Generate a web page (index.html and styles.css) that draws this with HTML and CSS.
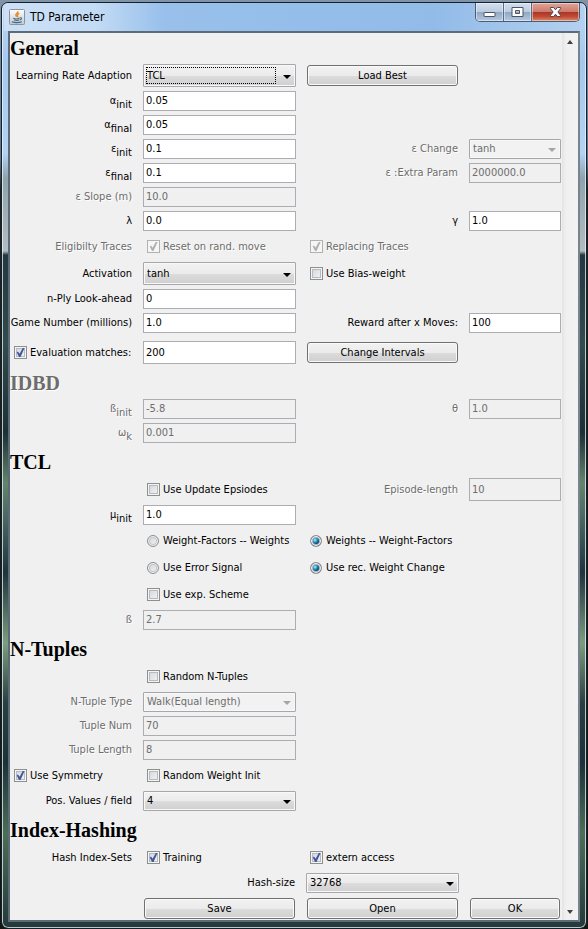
FILE: index.html
```html
<!DOCTYPE html>
<html lang="en">
<head>
<meta charset="utf-8">
<title>TD Parameter</title>
<link rel="stylesheet" href="styles.css">
</head>
<body>
<div class="window">
  <header class="titlebar">
    <svg class="app-icon" viewBox="0 0 16 16" aria-hidden="true">
      <defs><linearGradient id="tile" x1="0" y1="0" x2="0" y2="1"><stop offset="0" stop-color="#fdfdfd"/><stop offset="1" stop-color="#c3c8ce"/></linearGradient></defs>
      <rect x=".5" y=".5" width="15" height="15" rx="1" fill="url(#tile)" stroke="#8a949f"/>
      <path d="M8.8 2.2c.9 1.700-2.700 2.500-1.900 4.200.2.500.7.900.9 1.400M10.200 4.400C8.300 5.300 8 6.100 8.700 7c.3.500.2.900-.2 1.300" fill="none" stroke="#e8821e" stroke-width="1.300"/>
      <path d="M4.200 9.300c1.500.6 4.800.6 6.300 0M5 11c1.500.5 3.800.5 5.200 0M10.800 8.800c2.200-.5 2.200 1.600 0 2.300M2.800 12.800c2.600.9 7.200.9 10 0" fill="none" stroke="#42698c" stroke-width="1.100"/>
    </svg>
    <h1 class="title">TD Parameter</h1>
    <div class="caption-buttons">
      <button class="cap" type="button" aria-label="Minimize"><svg viewBox="0 0 13 11"><rect x="1" y="5.500" width="11" height="4" rx=".5" fill="#fff" stroke="#4a5464"/></svg></button>
      <button class="cap" type="button" aria-label="Maximize"><svg viewBox="0 0 13 11"><path d="M1 .5h11v9H1zM4.500 3.500v3h4v-3z" fill="#fff" fill-rule="evenodd" stroke="#4a5464"/></svg></button>
      <button class="cap close" type="button" aria-label="Close"><svg viewBox="0 0 13 11"><path d="M1.500.5h3.200l1.800 2.300L8.300.5h3.200v1.200L8.900 5l2.600 3.300v1.200H8.300L6.500 7.200 4.700 9.500H1.500V8.300L4.100 5 1.500 1.700z" fill="#fff" stroke="#5a4450"/></svg></button>
    </div>
  </header>
  <main class="pane">
    <form class="form">
      <h2>General</h2>
      <div class="row tall">
        <label class="name" for="lra">Learning Rate Adaption</label>
        <span class="combo focused"><select id="lra"><option>TCL</option></select></span>
        <button class="btn" type="button">Load Best</button>
      </div>
      <div class="row"><label class="name" for="ai">α<sub>init</sub></label><input class="field" id="ai" value="0.05"></div>
      <div class="row"><label class="name" for="af">α<sub>final</sub></label><input class="field" id="af" value="0.05"></div>
      <div class="row">
        <label class="name" for="ei">ε<sub>init</sub></label><input class="field" id="ei" value="0.1">
        <label class="name off" for="ec">ε Change</label>
        <span class="combo off"><select id="ec" disabled><option>tanh</option></select></span>
      </div>
      <div class="row">
        <label class="name" for="ef">ε<sub>final</sub></label><input class="field" id="ef" value="0.1">
        <label class="name off" for="ep">ε :Extra Param</label><input class="field" id="ep" value="2000000.0" disabled>
      </div>
      <div class="row"><label class="name off" for="es">ε Slope (m)</label><input class="field" id="es" value="10.0" disabled></div>
      <div class="row">
        <label class="name" for="la">λ</label><input class="field" id="la" value="0.0">
        <label class="name" for="ga">γ</label><input class="field" id="ga" value="1.0">
      </div>
      <div class="row tall">
        <span class="name off">Eligibilty Traces</span>
        <label class="check off"><input type="checkbox" checked disabled>Reset on rand. move</label>
        <label class="check off"><input type="checkbox" checked disabled>Replacing Traces</label>
      </div>
      <div class="row tall">
        <label class="name" for="ac">Activation</label>
        <span class="combo"><select id="ac"><option>tanh</option></select></span>
        <label class="check"><input type="checkbox">Use Bias-weight</label>
      </div>
      <div class="row"><label class="name" for="np">n-Ply Look-ahead</label><input class="field" id="np" value="0"></div>
      <div class="row">
        <label class="name" for="gn">Game Number (millions)</label><input class="field" id="gn" value="1.0">
        <label class="name" for="rw">Reward after x Moves:</label><input class="field" id="rw" value="100">
      </div>
      <div class="row tall spaced">
        <label class="check"><input type="checkbox" checked>Evaluation matches:</label>
        <input class="field" aria-label="Evaluation matches" value="200">
        <button class="btn" type="button">Change Intervals</button>
      </div>

      <h2 class="off">IDBD</h2>
      <div class="row">
        <label class="name off" for="bi">ß<sub>init</sub></label><input class="field" id="bi" value="-5.8" disabled>
        <label class="name off" for="th">θ</label><input class="field" id="th" value="1.0" disabled>
      </div>
      <div class="row"><label class="name off" for="om">ω<sub>k</sub></label><input class="field" id="om" value="0.001" disabled></div>

      <h2>TCL</h2>
      <div class="row tall">
        <label class="check second"><input type="checkbox">Use Update Epsiodes</label>
        <label class="name off" for="el">Episode-length</label><input class="field" id="el" value="10" disabled>
      </div>
      <div class="row"><label class="name" for="mu">μ<sub>init</sub></label><input class="field" id="mu" value="1.0"></div>
      <div class="row tall">
        <label class="check second"><input type="radio" name="order">Weight-Factors -- Weights</label>
        <label class="check"><input type="radio" name="order" checked>Weights -- Weight-Factors</label>
      </div>
      <div class="row tall">
        <label class="check second"><input type="radio" name="signal">Use Error Signal</label>
        <label class="check"><input type="radio" name="signal" checked>Use rec. Weight Change</label>
      </div>
      <div class="row tall"><label class="check second"><input type="checkbox">Use exp. Scheme</label></div>
      <div class="row"><label class="name off" for="be">ß</label><input class="field" id="be" value="2.7" disabled></div>

      <h2>N-Tuples</h2>
      <div class="row tall"><label class="check second"><input type="checkbox">Random N-Tuples</label></div>
      <div class="row">
        <label class="name off" for="nt">N-Tuple Type</label>
        <span class="combo off"><select id="nt" disabled><option>Walk(Equal length)</option></select></span>
      </div>
      <div class="row"><label class="name off" for="tn">Tuple Num</label><input class="field" id="tn" value="70" disabled></div>
      <div class="row"><label class="name off" for="tl">Tuple Length</label><input class="field" id="tl" value="8" disabled></div>
      <div class="row tall">
        <label class="check"><input type="checkbox" checked>Use Symmetry</label>
        <label class="check"><input type="checkbox">Random Weight Init</label>
      </div>
      <div class="row">
        <label class="name" for="pv">Pos. Values / field</label>
        <span class="combo"><select id="pv"><option>4</option></select></span>
      </div>

      <h2>Index-Hashing</h2>
      <div class="row tall">
        <span class="name">Hash Index-Sets</span>
        <label class="check"><input type="checkbox" checked>Training</label>
        <label class="check"><input type="checkbox" checked>extern access</label>
      </div>
      <div class="row">
        <label class="name second" for="hs">Hash-size</label>
        <span class="combo"><select id="hs"><option>32768</option></select></span>
      </div>
      <div class="row tall">
        <button class="btn second" type="button">Save</button>
        <button class="btn" type="button">Open</button>
        <button class="btn" type="button">OK</button>
      </div>
    </form>
    <div class="scrollbar">
      <button type="button" class="arrow up" aria-label="Scroll up"></button>
      <button type="button" class="arrow down" aria-label="Scroll down"></button>
    </div>
  </main>
</div>
</body>
</html>
```
FILE: styles.css
```css
* { box-sizing: border-box; }

body {
  margin: 0;
  padding: 2px 1px;
  min-height: 100vh;
  display: flex;
  background: linear-gradient(#8193a6, #5f7488 160px, #20231f 190px, #14170f);
  font: 11px/14px "DejaVu Sans Condensed", "DejaVu Sans", sans-serif;
  font-stretch: condensed;
  color: #000;
}

button, input, select { font: inherit; color: inherit; margin: 0; }

.window {
  flex: 1;
  display: flex;
  flex-direction: column;
  padding: 0 6px 6px;
  border: 1px solid #16202b;
  border-radius: 7px;
  box-shadow: inset 0 0 0 1px rgba(235, 245, 255, .75);
  background: linear-gradient(#bdd7f3, #a5c8ee 60px, #b4d3f3 150px, #8fa3ab 175px, #b4bcc0 248px, #243840 252px, #324b4c 340px, #1d3036 430px, #64856c 480px, #466360 520px, #20343b 570px, #7d9d7f 640px, #2a3f40 700px, #1d3238 760px, #4c6e57 830px, #243939);
}

.titlebar {
  display: flex;
  height: 28px;
  align-items: center;
  margin: 0 -4px;
  padding: 0 4px 0 5px;
  background: linear-gradient(90deg, #cbe0f6, #c4dcf5 90px, #98c0eb 160px, #92bbe8 430px, #b3d0f0);
  border-radius: 5px 5px 0 0;
}
.app-icon { width: 16px; height: 16px; }
.title { flex: 1; margin: 0 0 0 5px; font-size: 12px; font-weight: 400; }

.caption-buttons {
  display: flex;
  align-self: flex-start;
  border: 1px solid #4a5d75;
  border-top: 0;
  border-radius: 0 0 5px 5px;
  overflow: hidden;
}
.cap {
  width: 28px;
  height: 18px;
  padding: 0;
  display: flex;
  align-items: center;
  justify-content: center;
  border: 0;
  border-right: 1px solid #566b86;
  box-shadow: inset 0 0 0 1px rgba(255, 255, 255, .45);
  background: linear-gradient(#d3dfee, #bccbdf 48%, #8fa6c2 50%, #b5c9e0);
}
.cap svg { width: 13px; height: 11px; }
.cap.close {
  width: 47px;
  border-right: 0;
  background: linear-gradient(#e0a598, #cd7a6c 48%, #a83424 50%, #c24a34 75%, #d98b6c);
}

.pane {
  flex: 1;
  display: flex;
  border: 2px solid #5c6b7a;
  border-right-color: #77838f;
  background: #f0f0f0;
}
.form {
  flex: 1;
  display: flex;
  flex-direction: column;
  gap: 4px;
  min-width: 0;
}

h2 {
  margin: 0;
  font: bold 20px/30px "Liberation Serif", serif;
  height: 27px;
}
h2.off { color: #6d6d6d; text-shadow: 1px 1px #fff; }

.row {
  display: grid;
  grid-template-columns: 123fr 153fr 153fr 92fr;
  column-gap: 10px;
  height: 20px;
  align-items: stretch;
}
.row.tall { height: 23px; }
.row.spaced { margin-top: 4px; }
.second { grid-column: 2; }

.name {
  align-self: center;
  padding-right: 1px;
  text-align: right;
  white-space: nowrap;
  line-height: 16px;
}
.name sub { font-size: 11px; line-height: 0; vertical-align: -4px; }
.off { color: #6d6d6d; text-shadow: 1px 1px #fff; }

.field {
  width: 100%;
  min-width: 0;
  padding: 0 2px;
  border: 1px solid #abadb3;
  border-radius: 0;
  background: #fff;
}
.field:disabled { background: #f0f0f0; color: #6d6d6d; }

.combo { position: relative; display: flex; min-width: 0; }
.combo select {
  appearance: none;
  width: 100%;
  padding: 0 18px 0 3px;
  border: 1px solid #a5a7ad;
  border-radius: 1px;
  box-shadow: inset 0 0 0 1px #f8f8f8;
  background: linear-gradient(#f2f2f2, #ebebeb 50%, #dcdcdc 52%, #cfcfcf);
}
.combo select:disabled { opacity: 1; color: #6d6d6d; background: #f2f2f2; }
.combo::after {
  content: "";
  position: absolute;
  right: 5px;
  top: calc(50% - 1px);
  border: 4px solid transparent;
  border-top-color: #000;
  border-bottom: 0;
}
.combo.off::after { border-top-color: #a5a5a5; }
.combo.focused::before {
  content: "";
  position: absolute;
  inset: 3px 20px 3px 3px;
  border: 1px dotted #000;
}

.btn {
  margin: 1px;
  padding: 0;
  border: 1px solid #707070;
  border-radius: 3px;
  box-shadow: inset 0 0 0 1px #fafafa;
  background: linear-gradient(#f2f2f2, #ebebeb 50%, #dcdcdc 52%, #cfcfcf);
}

.check {
  display: flex;
  align-items: center;
  gap: 3px;
  padding-left: 4px;
  white-space: nowrap;
}
.check input {
  appearance: none;
  flex: none;
  width: 13px;
  height: 13px;
  border: 1px solid #8e8f8f;
  box-shadow: inset 0 0 0 1px #f4f4f4, inset 0 0 0 2px #b6bbc2;
  background: linear-gradient(135deg, #cfd3d8, #f6f6f6);
}
.check input:disabled {
  border-color: #b1b1b1;
  box-shadow: none;
  background: #f6f6f6;
}
.check input[type="checkbox"]:checked::before {
  content: "";
  display: block;
  width: 9px;
  height: 9px;
  margin: 1px;
  background: #41579a;
  clip-path: polygon(8% 50%, 22% 40%, 40% 65%, 75% 0, 95% 0, 50% 100%, 34% 100%);
}
.check input[type="checkbox"]:disabled::before { background: #b0b0b0; }
.check input[type="radio"] {
  width: 12px;
  height: 12px;
  margin-right: 1px;
  border-radius: 50%;
  box-shadow: inset 0 0 0 1px #f4f4f4, inset 0 0 0 2px #c3c7cb;
}
.check input[type="radio"]:checked {
  background: radial-gradient(circle at 4px 4px, #b8ecff, #2b9bcb 2px, #0c3f66 4px);
  box-shadow: inset 0 0 0 1px #f4f4f4, inset 0 0 0 2px #9fb0bc;
}

.scrollbar {
  width: 16px;
  margin-left: 1px;
  display: flex;
  flex-direction: column;
  justify-content: space-between;
  background: linear-gradient(90deg, #e4e4e4, #f0f0f0 4px, #f2f2f2);
}
.arrow {
  width: 16px;
  height: 17px;
  padding: 0;
  border: 0;
  background: none;
  display: flex;
  align-items: center;
  justify-content: center;
}
.arrow::before { content: ""; border: 3px solid transparent; }
.up::before { border-top: 0; border-bottom: 4px solid #404040; }
.down::before { border-bottom: 0; border-top: 4px solid #404040; }
```
